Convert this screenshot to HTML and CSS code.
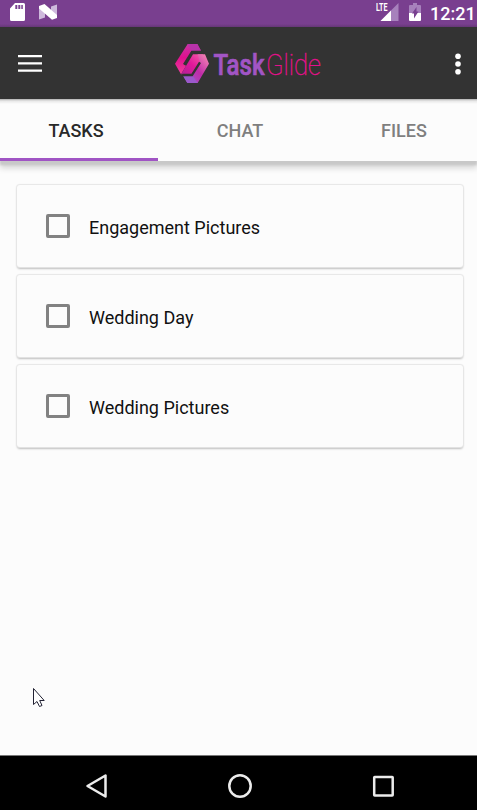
FILE: index.html
```
<!DOCTYPE html>
<html lang="en">
<head>
<meta charset="utf-8">
<title>TaskGlide</title>
<link rel="stylesheet" href="styles.css">
</head>
<body>
<div class="phone">
  <div class="status">
    <svg class="sd" width="15" height="18" viewBox="0 0 15 18"><path fill="#fff" fill-rule="evenodd" d="M5 0h8.500q1.500 0 1.500 1.500v15q0 1.500-1.500 1.500h-12Q0 18 0 16.500V5.500zM5.300 2v4h2V2zm3 0v4h2V2zm3 0v4h1.500V2z"/></svg>
    <svg class="nougat" width="18" height="16" viewBox="0 0 18 16"><path fill="#ceb9dc" d="M0 2l6 4v7.500L0 15.500zM18 .5V14l-6-5V2.500z"/><path fill="#fff" d="M0 2L5.500 0 18 11v3l-5 1.700L0 4.500z"/></svg>
    <svg class="signal" width="23" height="20" viewBox="0 0 23 20"><path fill="#a781bc" d="M22.500 1v18H4.500z"/><path fill="#fff" d="M15 8.500V19H4.500z"/><text class="lte" x="0" y="9" textLength="11.500" lengthAdjust="spacingAndGlyphs">LTE</text></svg>
    <svg class="battery" width="12" height="18" viewBox="0 0 12 18"><path fill="#a781bc" d="M4 0h4v2h3q1 0 1 1v7H0V3q0-1 1-1h3z"/><path fill="#fff" d="M0 10h12v7q0 1-1 1H1q-1 0-1-1z"/><path fill="#783f8f" d="M7.500 4v4.500h2L5 15.500V10.500H3z"/></svg>
    <span class="clock">12:21</span>
  </div>
  <header class="bar">
    <svg class="menu" width="24" height="18" viewBox="0 0 24 18"><path stroke="#fff" stroke-width="2.200" d="M0 1.200h24M0 8.400h24M0 15.600h24"/></svg>
    <svg class="logo" width="150" height="42" viewBox="0 0 150 42">
      <defs>
        <linearGradient id="left" x1="0" y1="0" x2="0" y2="1"><stop offset="0" stop-color="#c935a6"/><stop offset=".45" stop-color="#e0108e"/><stop offset="1" stop-color="#ef3f9d"/></linearGradient>
        <linearGradient id="band" x1="0" y1="1" x2="1" y2="0"><stop offset="0" stop-color="#b01f98"/><stop offset=".5" stop-color="#e0189a"/><stop offset="1" stop-color="#f560a8"/></linearGradient>
        <linearGradient id="right" x1="0" y1="1" x2="1" y2="0"><stop offset="0" stop-color="#9b5fd0"/><stop offset=".5" stop-color="#c02ba8"/><stop offset="1" stop-color="#fb8fb4"/></linearGradient>
      </defs>
      <g transform="scale(.33333) translate(-30 -39)">
        <path fill="url(#left)" d="M68 42h29l11 20-28 3-23 36 6 7-15 25L30 101z"/>
        <path fill="#b833aa" d="M68 42h29l11 20-28 2z"/>
        <path fill="url(#band)" d="M84 73h30l-9 24-25 36H48z"/>
        <path fill="url(#right)" d="M98 73h22l12 28-34 58H67l-12-20 27-3 23-36z"/>
        <path fill="#9b59cb" d="M55 139l27-3 16 23H67z"/>
        <path fill="none" stroke="#333" stroke-width="7" d="M110 66H81L57 104M52 135h29l24-38"/>
      </g>
      <text class="task" x="38.500" y="31.500" textLength="51" lengthAdjust="spacingAndGlyphs">Task</text>
      <text class="glide" x="91" y="31.500" textLength="55" lengthAdjust="spacingAndGlyphs">Glide</text>
    </svg>
    <svg class="more" width="6" height="22" viewBox="0 0 6 22"><g fill="#fff"><circle cx="3" cy="3.300" r="2.800"/><circle cx="3" cy="11" r="2.800"/><circle cx="3" cy="18.700" r="2.800"/></g></svg>
  </header>
  <nav class="tabs">
    <div class="tab active">TASKS</div>
    <div class="tab">CHAT</div>
    <div class="tab">FILES</div>
  </nav>
  <main class="list">
    <div class="card"><span class="box"></span><span>Engagement Pictures</span></div>
    <div class="card"><span class="box"></span><span>Wedding Day</span></div>
    <div class="card"><span class="box"></span><span>Wedding Pictures</span></div>
  </main>
  <svg class="pointer" width="14" height="21" viewBox="0 0 14 21"><path fill="#fff" stroke="#223" d="M.5.500v16l3.500-3 2.500 5 2.500-1-2.300-5h4.500z"/></svg>
  <footer class="nav">
    <svg width="24" height="26" viewBox="0 0 24 26"><path fill="none" stroke="#ececec" stroke-width="2.500" stroke-linejoin="round" d="M20.500 2.500v21L2.500 13z"/></svg>
    <svg width="26" height="26" viewBox="0 0 26 26"><circle cx="13" cy="13" r="10.700" fill="none" stroke="#ececec" stroke-width="2.500"/></svg>
    <svg width="24" height="24" viewBox="0 0 24 24"><rect x="3.200" y="3" width="18.500" height="18.500" rx=".5" fill="none" stroke="#ececec" stroke-width="2.500"/></svg>
  </footer>
</div>
</body>
</html>
```
FILE: styles.css
```
body { margin: 0; font-family: Roboto, "Liberation Sans", sans-serif; }
svg { display: block; flex: none; }
.phone { position: relative; width: 477px; height: 810px; display: flex; flex-direction: column; background: #fcfcfc; overflow: hidden; }
.status { height: 27px; display: flex; align-items: flex-start; background: linear-gradient(#793f8f 24px, #653776); color: #fff; flex: none; }
.sd { margin: 3px 0 0 10px; }
.nougat { margin: 4px 0 0 14px; }
.signal { margin: 2px 0 0 319px; }
.battery { margin: 3px 0 0 10px; }
.lte { font-size: 10px; font-weight: 700; fill: #fff; }
.clock { margin-left: 9px; font-size: 18px; line-height: 27px; font-weight: 500; white-space: nowrap; }
.bar { height: 72px; display: flex; background: #333; flex: none; }
.menu { margin: 28px 0 0 18px; }
.logo { margin: 16px 0 0 133px; overflow: visible; }
.more { margin: 26px 0 0 130px; }
.task { font-size: 29px; font-weight: 500; fill: #a255c5; stroke: #a255c5; stroke-width: .7px; }
.glide { font-size: 29px; font-weight: 100; fill: #e5108b; stroke: #e5108b; stroke-width: .4px; }
.tabs { height: 62px; display: grid; grid-template-columns: 158px 164px 164px; grid-template-rows: 62px; flex: none; background: linear-gradient(#b0b0b0, #e8e8e8 2px, #fcfcfc 5px); box-shadow: 0 4px 2px #c8c8c8, 0 7px 6px #d4d4d4; }
.tab { box-sizing: border-box; text-align: center; font-size: 18px; font-weight: 500; line-height: 64px; color: #7f7f7f; }
.active { color: #292929; padding-right: 6px; border-bottom: 3px solid #a054c4; }
.list { flex: 1; display: flex; flex-direction: column; gap: 8px; padding: 24px 14px 0 17px; }
.card { height: 82px; display: flex; align-items: center; box-sizing: border-box; padding: 0 0 0 29px; gap: 19px; background: #fcfcfc; border-radius: 3px; box-shadow: 0 0 1px 1px #e6e6e6, 0 2px 2px #bdbdbd; font-size: 18px; color: #111; }
.card span:last-child { padding-top: 2px; }
.box { box-sizing: border-box; width: 24px; height: 24px; border: 3px solid #828282; border-radius: 2px; }
.pointer { position: absolute; left: 33px; top: 688px; }
.nav { height: 55px; box-sizing: border-box; border-top: 1px solid #777; background: #000; display: flex; align-items: center; padding: 5px 0 0 85px; gap: 118px; flex: none; }
```
